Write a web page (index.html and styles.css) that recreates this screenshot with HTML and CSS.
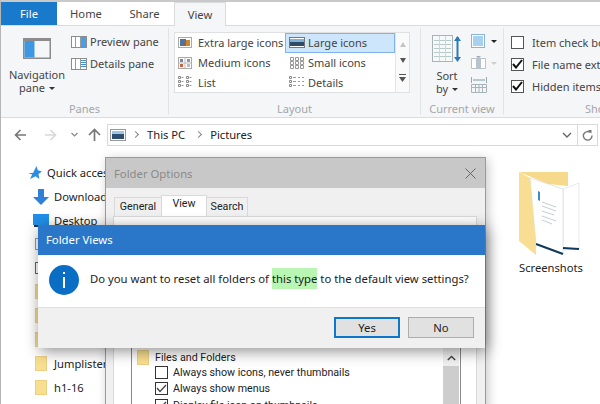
FILE: index.html
```html
<!DOCTYPE html>
<html lang="en">
<head>
<meta charset="utf-8">
<title>Folder Views</title>
<link rel="stylesheet" href="styles.css">
</head>
<body>
<div class="explorer">
  <nav class="tabs">
    <span class="tab file">File</span>
    <span class="tab home">Home</span>
    <span class="tab share">Share</span>
    <span class="tab view">View</span>
  </nav>
  <section class="ribbon">
    <div class="group panes">
      <div class="group-body panes-body">
        <div class="big-btn navpane">
          <svg width="28" height="21" viewBox="0 0 28 21"><rect x=".75" y=".75" width="26.500" height="19.500" fill="#f4f6f8" stroke="#8c8c8c" stroke-width="1.500"/><rect x="1.500" y="3" width="10" height="16.500" fill="#3f97e3"/><path d="M1 2h26" stroke="#8c8c8c" stroke-width="2"/></svg>
          <span>Navigation<br>pane <i class="caret"></i></span>
        </div>
        <div class="pane-col">
          <div class="item"><svg width="16" height="12" viewBox="0 0 16 12"><rect x=".5" y=".5" width="15" height="11" fill="#fff" stroke="#8c8c8c"/><path d="M4.500 1v10M9.500 1v10" stroke="#9a9a9a"/><rect x="10" y="1" width="5" height="10" fill="#4a9ee4"/></svg><span>Preview pane</span></div>
          <div class="item"><svg width="16" height="12" viewBox="0 0 16 12"><rect x=".5" y=".5" width="15" height="11" fill="#fff" stroke="#8c8c8c"/><path d="M4.500 1v10M9.500 1v10" stroke="#9a9a9a"/><path d="M10 2.500h5M10 4.500h5M10 6.500h5M10 8.500h5" stroke="#3a8fd8"/></svg><span>Details pane</span></div>
        </div>
      </div>
      <div class="group-label">Panes</div>
    </div>
    <div class="group layout">
      <div class="group-body">
        <div class="gallery">
          <div class="gal-col gal-a">
            <div class="gal-item"><svg class="ic" width="14" height="11" viewBox="0 0 14 11"><rect x=".5" y=".5" width="13" height="10" fill="#fff" stroke="#aaa"/><rect x="2" y="2" width="6" height="7" fill="#52739a"/><rect x="8" y="3" width="4" height="6" fill="#c88a2c"/><rect x="5" y="6" width="3" height="3" fill="#c0503c"/></svg><span>Extra large icons</span></div>
            <div class="gal-item"><svg class="ic" width="14" height="12" viewBox="0 0 14 12"><rect x=".5" y=".5" width="13" height="11" fill="#fff" stroke="#aaa"/><path d="M7 1v10M1 6h12" stroke="#bbb"/><rect x="2" y="2" width="3" height="3" fill="#6a8aa8"/><rect x="9" y="2" width="3" height="3" fill="#999"/><rect x="2" y="7" width="3" height="3" fill="#d0603c"/><rect x="9" y="7" width="3" height="3" fill="#bbb"/></svg><span>Medium icons</span></div>
            <div class="gal-item"><svg class="ic" width="14" height="12" viewBox="0 0 14 12"><path d="M.5 .5h2v2h-2zM.5 4.500h2v2h-2zM.5 8.500h2v2h-2zM8.500 .5h2v2h-2zM8.500 4.500h2v2h-2zM8.500 8.500h2v2h-2z" fill="none" stroke="#888"/><path d="M3.500 1.500h2M3.500 5.500h2M3.500 9.500h2M11.500 1.500h2M11.500 5.500h2M11.500 9.500h2" stroke="#999"/></svg><span>List</span></div>
          </div>
          <div class="gal-col gal-b">
            <div class="gal-item selected"><svg class="ic" width="16" height="11" viewBox="0 0 16 11"><rect x=".5" y=".5" width="15" height="10" fill="#fff" stroke="#777"/><rect x="1" y="2" width="14" height="3" fill="#7fb0d8"/><rect x="1" y="5" width="14" height="4" fill="#2f4a66"/></svg><span>Large icons</span></div>
            <div class="gal-item"><svg class="ic" width="16" height="12" viewBox="0 0 16 12"><path d="M1.500 .5h3v3h-3zM6.500 .5h3v3h-3zM11.500 .5h3v3h-3zM1.500 4.500h3v3h-3zM6.500 4.500h3v3h-3zM11.500 4.500h3v3h-3zM1.500 8.500h3v3h-3zM6.500 8.500h3v3h-3zM11.500 8.500h3v3h-3z" fill="none" stroke="#999"/></svg><span>Small icons</span></div>
            <div class="gal-item"><svg class="ic" width="16" height="12" viewBox="0 0 16 12"><path d="M.5 .5h2v2h-2zM.5 4.500h2v2h-2zM.5 8.500h2v2h-2z" fill="none" stroke="#888"/><path d="M4 1.500h3M4 5.500h3M4 9.500h3M9 1.500h2M9 5.500h2M9 9.500h2M13 1.500h2M13 5.500h2M13 9.500h2" stroke="#999"/></svg><span>Details</span></div>
          </div>
          <div class="gal-scroll">
            <svg width="6" height="5" viewBox="0 0 6 5"><path d="M3 0l3 5H0z" fill="#c4c4c4"/></svg>
            <svg width="6" height="5" viewBox="0 0 6 5"><path d="M0 0h6L3 5z" fill="#555"/></svg>
            <svg width="7" height="9" viewBox="0 0 7 9"><path d="M0 .5h7" stroke="#555"/><path d="M0 3h7L3.500 8z" fill="#555"/></svg>
          </div>
        </div>
      </div>
      <div class="group-label">Layout</div>
    </div>
    <div class="group current">
      <div class="group-body current-body">
        <div class="big-btn sort">
          <svg width="30" height="28" viewBox="0 0 30 28"><rect x=".5" y=".5" width="20" height="26" fill="#f6f8f9" stroke="#aab2b8"/><path d="M2 5.500h17M2 9.500h17M2 13.500h17M2 17.500h17M2 21.500h17" stroke="#b7c9c7"/><path d="M7.500 1v25M13.500 1v25" stroke="#cfd6d6"/><path d="M25.500 2v23" stroke="#2a7ab8" stroke-width="2"/><path d="M22 6l3.500-5L29 6zM22 22l3.500 5 3.500-5z" fill="#2a7ab8"/></svg>
          <span>Sort<br>by <i class="caret"></i></span>
        </div>
        <div class="view-col">
          <div class="vrow"><svg width="15" height="14" viewBox="0 0 15 14"><rect x=".5" y=".5" width="13" height="13" fill="#fff" stroke="#8ab4d8"/><rect x="2" y="2" width="10" height="10" fill="#a8d0f0"/></svg><i class="caret dark"></i></div>
          <div class="vrow"><svg width="15" height="14" viewBox="0 0 15 14"><path d="M.5 2.500h14v10H.5z" fill="#fff" stroke="#b8c4cc"/><rect x="5" y="2" width="5" height="11" fill="#b8c4cc"/><path d="M5 0h5l-2.500 2.500z" fill="#aab"/></svg><i class="caret pale"></i></div>
          <div class="vrow"><svg width="16" height="16" viewBox="0 0 16 16"><path d="M.5 0v6M15.500 0v6" stroke="#9aa"/><path d="M2 3h12" stroke="#79a"/><path d="M.5 7.500h15v8H.5zM.5 10.500h15M4.500 8v8M8 8v8M11.500 8v8" fill="none" stroke="#a8b4bc"/></svg></div>
        </div>
      </div>
      <div class="group-label">Current view</div>
    </div>
    <div class="group show">
      <div class="group-body show-body">
        <div class="chk"><i class="box"></i><span>Item check boxes</span></div>
        <div class="chk"><i class="box on"><svg width="11" height="10" viewBox="0 0 11 10"><path d="M1 5l3 3.500L10 1" fill="none" stroke="#111" stroke-width="2"/></svg></i><span>File name extensions</span></div>
        <div class="chk"><i class="box on"><svg width="11" height="10" viewBox="0 0 11 10"><path d="M1 5l3 3.500L10 1" fill="none" stroke="#111" stroke-width="2"/></svg></i><span>Hidden items</span></div>
      </div>
      <div class="group-label">Show/hide</div>
    </div>
  </section>
  <div class="addr-row">
    <div class="nav-arrows">
      <svg width="13" height="12" viewBox="0 0 13 12"><path d="M12 6H2M6.500 1L1.500 6l5 5" fill="none" stroke="#777" stroke-width="1.600"/></svg>
      <svg width="13" height="12" viewBox="0 0 13 12"><path d="M1 6h10M6.500 1l5 5-5 5" fill="none" stroke="#d8d8d8" stroke-width="1.600"/></svg>
      <svg width="7" height="5" viewBox="0 0 7 5"><path d="M.5 1l3 3 3-3" fill="none" stroke="#888" stroke-width="1.200"/></svg>
      <svg width="13" height="13" viewBox="0 0 13 13"><path d="M6.500 13V2M1 7l5.500-5.500L12 7" fill="none" stroke="#777" stroke-width="1.700"/></svg>
    </div>
    <div class="addr">
      <svg class="pic" width="16" height="12" viewBox="0 0 16 12"><rect x=".5" y=".5" width="15" height="11" fill="#fff" stroke="#999"/><rect x="2" y="2" width="12" height="3" fill="#9cc8e8"/><rect x="2" y="5" width="12" height="5" fill="#2f4f6e"/></svg>
      <i class="crumb"></i><span class="a-this">This PC</span><i class="crumb"></i><span class="a-pic">Pictures</span>
      <span class="spacer"></span>
      <svg class="hist" width="10" height="6" viewBox="0 0 10 6"><path d="M1 1l4 4 4-4" fill="none" stroke="#666" stroke-width="1.400"/></svg>
      <span class="refresh"><svg width="11" height="12" viewBox="0 0 11 12"><path d="M8.500 3.500A4.300 4.300 0 1 0 10 6.500" fill="none" stroke="#777" stroke-width="1.400"/><path d="M6 1l3.500 0v3.500z" fill="#777"/></svg></span>
    </div>
  </div>
  <div class="content">
    <ul class="tree">
      <li class="t-quick"><svg width="14" height="14" viewBox="0 0 14 14"><path d="M8.500 0l1.300 4.200L14 5.400l-3.500 2.700.9 4.900-3.800-2.800L2 13l2.200-4.500L0 7l5 0z" fill="#2b8ee0"/></svg><span>Quick access</span></li>
      <li class="t-sys"><svg width="16" height="16" viewBox="0 0 16 16"><path d="M5 0h6v8h5l-8 8-8-8h5z" fill="#2f80d8"/></svg><span>Downloads</span></li>
      <li class="t-sys"><svg width="16" height="13" viewBox="0 0 16 13"><rect width="16" height="11" fill="#1f90e8"/><rect x="1" y="11" width="4" height="2" fill="#333"/></svg><span>Desktop</span></li>
      <li class="t-folder"><svg width="12" height="12" viewBox="0 0 12 12"><rect x=".5" y=".5" width="11" height="11" fill="#fff" stroke="#999"/></svg></li>
      <li class="t-folder"><svg width="12" height="12" viewBox="0 0 12 12"><rect x=".5" y=".5" width="11" height="11" fill="#fff" stroke="#666"/></svg></li>
      <li class="t-folder"><i class="tfolder"></i></li>
      <li class="t-folder"><i class="tfolder"></i></li>
      <li class="t-folder"><i class="tfolder"></i></li>
      <li class="t-folder"><i class="tfolder"></i><span>Jumplister</span></li>
      <li class="t-folder"><i class="tfolder"></i><span>h1-16</span></li>
    </ul>
    <figure class="big-folder">
      <svg width="62" height="84" viewBox="0 0 62 84">
        <path d="M1 0H50V14L30 12Z" fill="#f6d98a"/>
        <path d="M45 17L61 11V77L45 78Z" fill="#fff" stroke="#dcdcdc" stroke-width=".6"/>
        <path d="M12 6L45 17V82L18 72Z" fill="#fff" stroke="#d4d4d4" stroke-width=".6"/>
        <path d="M20 19l2 1v9l-2-1z" fill="#3f8cc8"/>
        <path d="M24 30l14 5M24 34l14 5M24 39l12 4M24 44l14 5M24 48l10 4" stroke="#c8ccd0"/>
        <path d="M18 72L45 82M45 76L61 77" stroke="#0f3a5c" stroke-width="2" fill="none"/>
        <path d="M1 0L12 6L18 72V83L1 69Z" fill="#f8de92"/>
      </svg>
      <figcaption>Screenshots</figcaption>
    </figure>
  </div>

  <section class="win options">
    <header class="opt-title"><span>Folder Options</span>
      <svg width="11" height="11" viewBox="0 0 11 11"><path d="M.5.5l10 10M10.500.5l-10 10" stroke="#666"/></svg>
    </header>
    <div class="opt-tabs">
      <span class="otab">General</span><span class="otab active">View</span><span class="otab">Search</span>
    </div>
    <div class="opt-panel">
      <div class="adv">
        <div class="adv-list">
          <div class="adv-row head"><i class="tfolder"></i><span>Files and Folders</span></div>
          <div class="adv-row"><i class="obox"></i><span>Always show icons, never thumbnails</span></div>
          <div class="adv-row"><i class="obox"><svg width="11" height="9" viewBox="0 0 11 9"><path d="M1 4l3 3.500L10 1" fill="none" stroke="#444" stroke-width="1.300"/></svg></i><span>Always show menus</span></div>
          <div class="adv-row"><i class="obox"><svg width="11" height="9" viewBox="0 0 11 9"><path d="M1 4l3 3.500L10 1" fill="none" stroke="#444" stroke-width="1.300"/></svg></i><span>Display file icon on thumbnails</span></div>
        </div>
        <div class="adv-scroll">
          <svg width="9" height="6" viewBox="0 0 9 6"><path d="M.8 5L4.500 1.500 8.200 5" fill="none" stroke="#444" stroke-width="1.500"/></svg>
          <div class="thumb"></div>
        </div>
      </div>
    </div>
  </section>

  <section class="win views">
    <header class="views-title">Folder Views</header>
    <div class="views-msg">
      <svg class="info" width="30" height="30" viewBox="0 0 30 30"><circle cx="15" cy="15" r="15" fill="#0a6ec4"/><rect x="14" y="7" width="2" height="2" fill="#fff"/><rect x="14" y="12" width="2" height="11" fill="#fff"/></svg>
      <p>Do you want to reset all folders of <mark>this type</mark> to the default view settings?</p>
    </div>
    <footer class="views-foot">
      <button class="btn yes">Yes</button>
      <button class="btn">No</button>
    </footer>
  </section>
</div>
</body>
</html>
```

FILE: styles.css
```css
* { box-sizing: border-box; }
html, body { margin: 0; padding: 0; }
body { width: 600px; height: 404px; overflow: hidden; background: #fff; font-family: "Noto Sans", "Liberation Sans", sans-serif; color: #222; }
.explorer { position: relative; width: 600px; height: 404px; overflow: hidden; border-top: 2px solid #c9c9c9; border-left: 1px solid #b5b5b5; font-size: 11.2px; }
.tabs { display: flex; height: 23px; font-size: 11.2px; color: #444; }
.tab { display: flex; align-items: center; justify-content: center; }
.file { width: 56px; background: #1979ca; color: #fff; }
.home { width: 58px; }
.share { width: 59px; }
.view { width: 52px; background: #f5f6f7; border: 1px solid #dadbdc; border-bottom: 0; margin-bottom: -1px; position: relative; z-index: 1; }
.ribbon { display: flex; height: 93px; background: #f5f6f7; border-top: 1px solid #dadbdc; border-bottom: 1px solid #dadbdc; padding-top: 2px; color: #444; font-size: 11px; }
.group { display: flex; flex-direction: column; border-right: 1px solid #e2e3e4; margin-bottom: 2px; flex: none; }
.group-body { flex: 1; display: flex; }
.group-label { height: 16px; text-align: center; color: #a4a7aa; font-size: 11px; line-height: 20px; white-space: nowrap; }
.panes { width: 168px; }
.panes-body { padding-left: 8px; }
.big-btn { display: flex; flex-direction: column; align-items: center; text-align: center; line-height: 13px; }
.navpane { width: 56px; padding-top: 10px; gap: 9px; }
.caret { display: inline-block; border: 3px solid transparent; border-top: 3px solid #333; border-bottom: 0; width: 0; height: 0; vertical-align: 2px; margin-left: 1px; }
.caret.dark { border-top-color: #222; }
.caret.pale { border-top-color: #ccc; }
.pane-col { display: flex; flex-direction: column; padding: 6px 0 0 6px; gap: 7px; }
.item { display: flex; align-items: center; gap: 3px; height: 15px; white-space: nowrap; }
.layout { width: 252px; padding-left: 5px; }
.layout .group-label { margin-left: -5px; }
.gallery { display: flex; width: 236px; height: 61px; margin-top: 4px; background: #fff; border: 1px solid #dfe0e1; }
.gal-col { display: flex; flex-direction: column; flex: none; width: 110px; }
.gal-a { padding-left: 3px; }
.gal-item { display: flex; align-items: center; height: 20px; white-space: nowrap; }
.gal-item .ic { flex: none; margin-right: 6px; }
.gal-b .gal-item { padding-left: 4px; }
.gal-b .gal-item .ic { margin-right: 3px; }
.gal-b .selected { background: #cde6fb; border: 1px solid #7eb4ea; padding-left: 3px; }
.gal-scroll { flex: 1; display: flex; flex-direction: column; align-items: center; justify-content: space-around; border-left: 1px solid #e5e5e5; background: #fafafa; padding: 4px 0; }
.current { width: 83px; padding-left: 11px; }
.current .group-label { margin-left: -11px; }
.sort { width: 30px; padding-top: 7px; gap: 6px; }
.view-col { display: flex; flex-direction: column; gap: 6px; padding: 5px 0 0 9px; }
.vrow { display: flex; align-items: center; gap: 4px; height: 16px; }
.show { flex: 1; padding: 7px 0 0 7px; border: 0; }
.show-body { display: flex; flex-direction: column; gap: 8px; white-space: nowrap; }
.show .group-label { text-align: left; padding-left: 74px; }
.chk { display: flex; align-items: center; height: 14px; gap: 8px; flex: none; }
.box { width: 13px; height: 13px; border: 1px solid #555; background: #fff; display: flex; align-items: center; justify-content: center; flex: none; }
.addr-row { display: flex; align-items: center; height: 33px; padding-left: 13px; }
.nav-arrows { display: flex; align-items: center; width: 93px; flex: none; }
.nav-arrows svg:nth-child(2) { margin-left: 17px; }
.nav-arrows svg:nth-child(3) { margin-left: 14px; }
.nav-arrows svg:nth-child(4) { margin-left: 10px; }
.addr { display: flex; align-items: center; width: 491px; height: 22px; flex: none; border: 1px solid #d9d9d9; color: #222; padding-left: 2px; }
.pic { margin-right: 7px; flex: none; }
.crumb { width: 5px; height: 5px; border-top: 1px solid #888; border-right: 1px solid #888; transform: rotate(45deg); margin-right: 9px; flex: none; }
.a-this { margin-right: 11px; }
.spacer { flex: 1; }
.hist { margin-right: 5px; }
.refresh { width: 20px; height: 20px; border-left: 1px solid #d9d9d9; display: flex; align-items: center; justify-content: center; }
.content { display: flex; justify-content: space-between; height: 254px; }
.tree { list-style: none; margin: 0; padding: 10px 0 0 0; }
.tree li { display: flex; align-items: center; height: 23.800px; white-space: nowrap; }
.t-quick { margin-left: 27px; gap: 5px; }
.t-sys { margin-left: 32px; gap: 5px; }
.t-folder { margin-left: 34px; gap: 7px; }
.tfolder { display: block; width: 12px; height: 15px; background: #f8de8f; border: 1px solid #ecd084; flex: none; }
.big-folder { margin: 21px 16px 0 0; text-align: center; width: 66px; }
.big-folder svg { display: block; margin: 0 0 4px; }
.win { position: absolute; }
.options { left: 104px; top: 155px; width: 381px; height: 260px; background: #f0f0f0; border: 1px solid #9a9a9a; box-shadow: 2px 2px 10px rgba(0,0,0,.22); color: #222; font-family: Roboto, "Noto Sans", sans-serif; font-size: 10.7px; }
.opt-title { height: 30px; background: #c8c8c8; color: #8a8a8a; display: flex; align-items: center; justify-content: space-between; padding: 0 9px 0 8px; font-family: "Noto Sans", sans-serif; font-size: 11.3px; }
.opt-tabs { display: flex; align-items: flex-end; height: 28px; padding-left: 8px; }
.otab { height: 19px; width: 48px; text-align: center; line-height: 18px; background: #f0f0f0; border: 1px solid #d9d9d9; border-bottom: 0; margin-right: -1px; }
.otab.active { height: 21px; width: 46px; background: #fff; line-height: 16px; position: relative; }
.otab:last-child { width: 42px; }
.opt-panel { background: #fff; margin: 0 8px 0 7px; height: 200px; border: 1px solid #d9d9d9; padding: 30px 0 0 17px; }
.adv { display: flex; width: 330px; height: 170px; border-left: 1px solid #888; border-right: 1px solid #888; }
.adv-list { flex: 1; padding: 103px 0 0 5px; }
.adv-row { display: flex; align-items: center; height: 16.500px; gap: 5px; margin-left: 18px; white-space: nowrap; }
.adv-row.head { margin-left: 0; height: 14px; gap: 6px; }
.obox { width: 13px; height: 13px; border: 1px solid #333; background: #fff; flex: none; display: flex; align-items: center; justify-content: center; }
.adv-scroll { width: 16px; margin-right: 1px; background: #f0f0f0; display: flex; flex-direction: column; align-items: center; padding-top: 108px; flex: none; }
.thumb { flex: 1; width: 100%; margin-top: 5px; background: #cdcdcd; }
.views { left: 37px; top: 223px; width: 447px; height: 123px; background: #fff; box-shadow: 2px 3px 14px rgba(0,0,0,.45); display: flex; flex-direction: column; }
.views-title { height: 30px; background: #2a77c9; color: #fff; font-size: 11.3px; display: flex; align-items: center; padding: 0 0 2px 8px; flex: none; }
.views-msg { display: flex; align-items: center; height: 52px; flex: none; gap: 11px; padding: 0 0 3px 11px; }
.info { flex: none; }
.views-msg p { margin: -3px 0 0; font-size: 11.3px; white-space: nowrap; }
mark { background: #b9f6b4; color: inherit; padding: 3px 0; }
.views-foot { flex: 1; background: #f0f0f0; border-top: 1px solid #dfdfdf; display: flex; justify-content: flex-end; gap: 8px; padding: 9px 11px 0 0; }
.btn { width: 66px; height: 21px; background: #e1e1e1; border: 1px solid #adadad; font: inherit; font-size: 11.3px; color: #222; padding: 0; }
.btn.yes { border: 2px solid #0d78ca; }
```
